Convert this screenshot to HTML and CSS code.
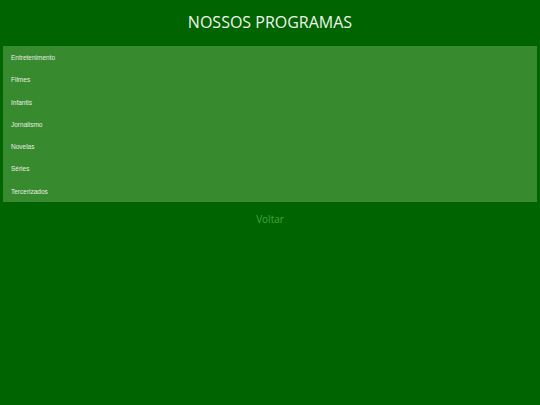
FILE: index.html
```html
<!DOCTYPE html>
<html lang="pt">
<head>
<meta charset="utf-8">
<title>Nossos Programas</title>
<link rel="stylesheet" href="styles.css">
</head>
<body>
<div class="page">
  <h1 class="title">NOSSOS PROGRAMAS</h1>
  <ul class="menu">
    <li class="menu-item">Entretenimento</li>
    <li class="menu-item">Filmes</li>
    <li class="menu-item">Infantis</li>
    <li class="menu-item">Jornalismo</li>
    <li class="menu-item">Novelas</li>
    <li class="menu-item">Séries</li>
    <li class="menu-item">Tercerizados</li>
  </ul>
  <a class="back" href="#">Voltar</a>
</div>
</body>
</html>
```
FILE: styles.css
```css
html, body {
  margin: 0;
  padding: 0;
  background: #006400;
  height: 100%;
}
.page {
  padding: 0 3px;
  display: flex;
  flex-direction: column;
  align-items: stretch;
}
.title {
  margin: 0;
  height: 46px;
  line-height: 44px;
  text-align: center;
  color: #eef5ee;
  font-family: "Open Sans", "Noto Sans", sans-serif;
  font-weight: 400;
  font-size: 16px;
}
.menu {
  list-style: none;
  margin: 0;
  padding: 0;
  background: #388a2e;
}
.menu-item {
  height: 22.3px;
  line-height: 24px;
  padding-left: 8px;
  color: #e6f0e4;
  font-family: "Liberation Sans", Arial, sans-serif;
  font-size: 6.5px;
}
.back {
  align-self: center;
  margin-top: 10px;
  color: #3fa83a;
  text-decoration: none;
  font-family: "Open Sans", "Noto Sans", sans-serif;
  font-size: 10px;
}
```
